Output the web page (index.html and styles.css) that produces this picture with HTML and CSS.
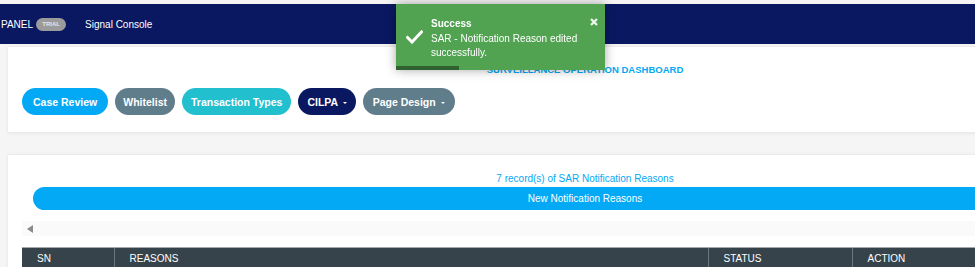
FILE: index.html
```html
<!DOCTYPE html>
<html lang="en">
<head>
  <meta charset="UTF-8">
  <meta name="viewport" content="width=device-width, initial-scale=1.0">
  <title>Notification Reasons</title>
  <link rel="stylesheet" href="styles.css">
</head>
<body>
  <div class="page">
    <div class="topbar">
      <span class="brand">PANEL</span>
      <span class="badge">TRIAL</span>
      <span class="nav-link">Signal Console</span>
    </div>

    <div class="content">
      <div class="card card-menu">
        <div class="card-title">SURVEILLANCE OPERATION DASHBOARD</div>
        <div class="menu">
          <button class="pill pill-blue">Case Review</button>
          <button class="pill pill-grey pill-narrow">Whitelist</button>
          <button class="pill pill-teal">Transaction Types</button>
          <button class="pill pill-navy">CILPA <span class="caret"></span></button>
          <button class="pill pill-grey">Page Design <span class="caret"></span></button>
        </div>
      </div>

      <div class="card card-list">
        <div class="record-count">7 record(s) of SAR Notification Reasons</div>
        <button class="btn-new">New Notification Reasons</button>
        <div class="hscroll"><span class="hscroll-arrow"></span></div>
        <table class="grid">
          <colgroup>
            <col class="col-sn">
            <col class="col-reason">
            <col class="col-status">
            <col class="col-action">
          </colgroup>
          <thead>
            <tr>
              <th>SN</th>
              <th>REASONS</th>
              <th>STATUS</th>
              <th>ACTION</th>
            </tr>
          </thead>
        </table>
      </div>
    </div>
  </div>

  <div class="toast">
    <svg class="toast-icon" width="17" height="14" viewBox="0 0 17 14">
      <path d="M1.5 7.5 L6 12 L15.5 2" fill="none" stroke="#fff" stroke-width="3" stroke-linecap="square"/>
    </svg>
    <svg class="toast-close" width="8" height="8" viewBox="0 0 8 8">
      <path d="M1 1 L7 7 M7 1 L1 7" stroke="#fff" stroke-width="2.3"/>
    </svg>
    <div class="toast-title">Success</div>
    <div class="toast-message">SAR - Notification Reason edited successfully.</div>
    <div class="toast-progress"></div>
  </div>
</body>
</html>
```

FILE: styles.css
```css
body, html {
  margin: 0;
  padding: 0;
  font-family: "Liberation Sans", Arial, sans-serif;
  background-color: #f5f5f5;
  overflow: hidden;
}

.page {
  width: 1170px;
}

.topbar {
  margin-top: 4px;
  height: 40px;
  background-color: #0a1862;
  color: #FFFFFF;
  display: flex;
  align-items: center;
  padding-left: 1px;
  font-size: 10px;
}

.topbar .brand {
  padding-top: 1px;
}

.topbar .badge {
  margin-left: 3px;
  width: 30px;
  height: 13px;
  line-height: 13px;
  border-radius: 7px;
  background-color: #9b9b9b;
  color: #e6e6e6;
  font-size: 6px;
  font-weight: bold;
  text-align: center;
}

.topbar .nav-link {
  margin-left: 19px;
  padding-top: 1px;
}

.content {
  padding: 2px 8px 0;
}

.card {
  background-color: #FFFFFF;
  box-shadow: 0 1px 4px rgba(0, 0, 0, 0.08);
  border-top: 1px solid #ececec;
}

.card-menu {
  padding: 16px 14px 17px;
}

.card-title {
  text-align: center;
  color: #03a9f4;
  font-size: 9.5px;
  font-weight: bold;
  line-height: 14px;
  margin-bottom: 11px;
}

.menu {
  display: flex;
  gap: 7px;
}

.pill {
  border: none;
  height: 27px;
  padding: 0 10px;
  border-radius: 14px;
  color: #FFFFFF;
  font-family: inherit;
  font-size: 10.5px;
  font-weight: bold;
  cursor: pointer;
}

.pill-blue { background-color: #03a9f4; padding: 0 11px; }
.pill-grey { background-color: #607d8b; padding: 0 10px; }
.pill-teal { background-color: #22bfcf; padding: 0 9px; }
.pill-navy { background-color: #0a1862; padding: 0 9px; }
.pill-narrow { padding: 0 8px; }

.caret {
  display: inline-block;
  width: 0;
  height: 0;
  margin-left: 2px;
  vertical-align: middle;
  border-top: 2px solid #FFFFFF;
  border-left: 2px solid transparent;
  border-right: 2px solid transparent;
}

.card-list {
  margin-top: 22px;
  padding: 17px 14px 0;
}

.record-count {
  text-align: center;
  color: #03a9f4;
  font-size: 10px;
  line-height: 14px;
}

.btn-new {
  display: block;
  width: calc(100% - 22px);
  margin: 1px 11px 0;
  height: 23px;
  border: none;
  border-radius: 12px;
  background-color: #03a9f4;
  color: #FFFFFF;
  font-family: inherit;
  font-size: 10px;
}

.hscroll {
  margin-top: 11px;
  height: 15px;
  background-color: #fafafa;
  display: flex;
  align-items: center;
  padding-left: 5px;
}

.hscroll-arrow {
  width: 0;
  height: 0;
  border-top: 4px solid transparent;
  border-bottom: 4px solid transparent;
  border-right: 6px solid #8a8a8a;
}

.grid {
  margin-top: 11px;
  width: 1126px;
  table-layout: fixed;
  border-collapse: collapse;
}

.grid th {
  background-color: #37434b;
  color: #FFFFFF;
  border-top: 1px solid #a2a8ab;
  font-size: 10px;
  font-weight: normal;
  text-align: left;
  line-height: 14px;
  padding: 4px 15px 8px;
}

.grid th + th {
  border-left: 1px solid #6b757a;
}

.grid .col-sn { width: 92px; }
.grid .col-reason { width: 594px; }
.grid .col-status { width: 144px; }
.grid .col-action { width: 296px; }

.toast {
  position: fixed;
  top: 4px;
  left: 396px;
  width: 209px;
  box-sizing: border-box;
  padding: 13px 20px 10px 35px;
  background-color: #51a351;
  color: #FFFFFF;
  font-size: 10px;
  line-height: 14px;
  box-shadow: 0 0 10px rgba(0, 0, 0, 0.35);
}

.toast-icon {
  position: absolute;
  left: 10px;
  top: 26px;
}

.toast-close {
  position: absolute;
  right: 7px;
  top: 14px;
  opacity: 0.9;
}

.toast-title {
  font-weight: bold;
  margin-bottom: 1px;
}

.toast-progress {
  position: absolute;
  left: 0;
  bottom: 0;
  width: 63px;
  height: 4px;
  background-color: rgba(0, 0, 0, 0.4);
}
```
